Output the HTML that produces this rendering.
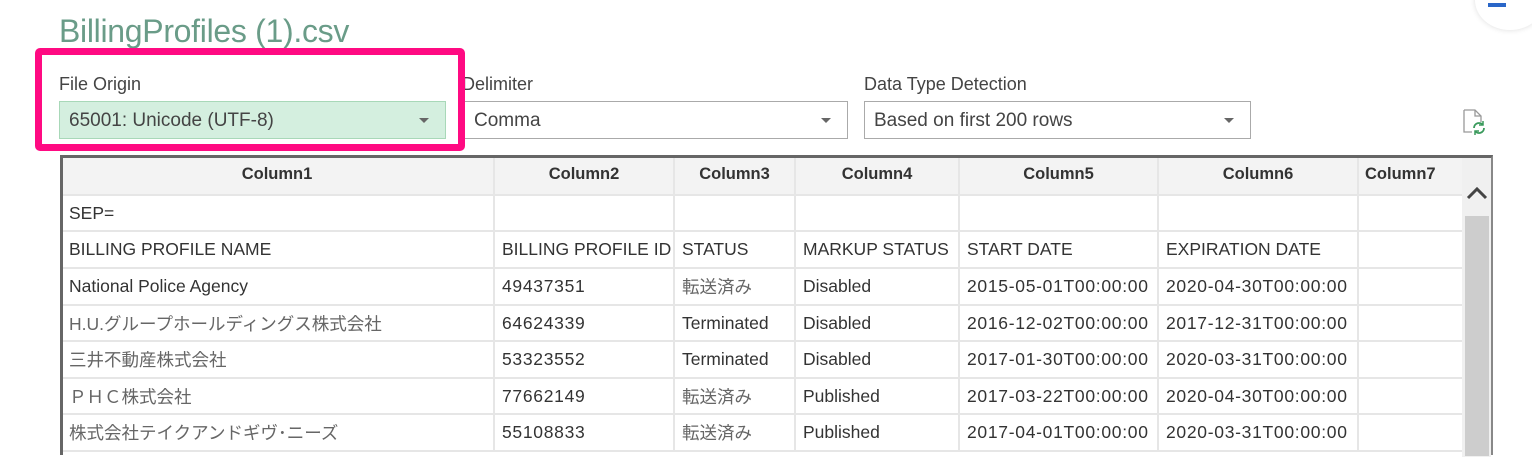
<!DOCTYPE html>
<html><head><meta charset="utf-8"><style>
body{margin:0;width:1532px;height:452px;background:#fff;position:relative;overflow:hidden;font-family:"Liberation Sans","Noto Sans CJK JP",sans-serif;color:#444}
.a{position:absolute}
.title{left:59px;top:13px;font-size:32px;color:#6a9c88;letter-spacing:-0.3px}
.lbl{font-size:18px;color:#444;top:74px}
.dd{top:101px;border:1px solid #aaa;background:#fff;font-size:19px;line-height:37px;padding-left:9px;box-sizing:border-box;height:38px;color:#444}
.dd:after{content:"";position:absolute;right:16px;top:16px;border-left:5px solid transparent;border-right:5px solid transparent;border-top:5px solid #666}
.pink{left:35px;top:48px;width:430px;height:103px;border:7px solid #ff0a82;border-radius:5px;box-sizing:border-box}
table{position:absolute;left:60px;top:155px;border-collapse:collapse;font-size:17.5px;color:#333;table-layout:fixed;width:1402px}
td{border:2px solid #e6e6e6;height:33px;padding:0 0 0 7px;white-space:nowrap;box-sizing:border-box;overflow:hidden}
th{background:#f3f3f3;font-weight:bold;height:37px;border-right:2px solid #e6e6e6;border-bottom:2px solid #e6e6e6;font-size:16.5px;color:#333;overflow:hidden;white-space:nowrap}
.tb{position:absolute;left:60px;top:155px;width:1433px;height:300px;border-left:3px solid #666;border-top:3px solid #666;border-right:2px solid #888;box-sizing:border-box;pointer-events:none}
.jp{color:#666}
.d{letter-spacing:0.7px}
</style></head><body>
<div class="a title">BillingProfiles (1).csv</div>
<div class="a" style="left:1475px;top:-30px;width:70px;height:60px;border-radius:50%;box-shadow:0 0 6px #ddd;background:#fff"></div>
<div class="a" style="left:1488px;top:3px;width:18px;height:4px;background:#2a66c8"></div>
<div class="a lbl" style="left:59px">File Origin</div>
<div class="a lbl" style="left:462px">Delimiter</div>
<div class="a lbl" style="left:864px">Data Type Detection</div>
<div class="a dd" style="left:59px;width:387px;background:#d4efdf;border-color:#a8d8b8">65001: Unicode (UTF-8)</div>
<div class="a dd" style="left:464px;width:384px">Comma</div>
<div class="a dd" style="left:864px;width:387px">Based on first 200 rows</div>
<div class="a pink"></div>
<svg class="a" style="left:1460px;top:108px" width="28" height="28" viewBox="0 0 28 28"><path d="M4 2h11l6 6v6M4 2v22h8" fill="none" stroke="#999" stroke-width="1.3"/><path d="M15 2v6h6" fill="none" stroke="#999" stroke-width="1.3"/><path d="M14 20a5 5 0 0 1 9-3M24 20a5 5 0 0 1-9 3" fill="none" stroke="#3a9a5c" stroke-width="1.8"/><path d="M23 13v4h-4M15 27v-4h4" fill="none" stroke="#3a9a5c" stroke-width="1.5"/></svg>
<table>
<colgroup><col style="width:433px"><col style="width:180px"><col style="width:121px"><col style="width:164px"><col style="width:199px"><col style="width:200px"><col style="width:105px"></colgroup>
<tr><th>Column1</th><th>Column2</th><th>Column3</th><th>Column4</th><th>Column5</th><th>Column6</th><th style="text-align:left;padding-left:6px">Column7</th></tr>
<tr><td style="height:36px">SEP=</td><td></td><td></td><td></td><td></td><td></td><td></td></tr>
<tr><td style="height:37px">BILLING PROFILE NAME</td><td>BILLING PROFILE ID</td><td>STATUS</td><td>MARKUP STATUS</td><td>START DATE</td><td>EXPIRATION DATE</td><td></td></tr>
<tr><td style="height:37px">National Police Agency</td><td class="d">49437351</td><td class="jp">転送済み</td><td>Disabled</td><td class="d">2015-05-01T00:00:00</td><td class="d">2020-04-30T00:00:00</td><td></td></tr>
<tr><td style="height:36px" class="jp">H.U.グループホールディングス株式会社</td><td class="d">64624339</td><td>Terminated</td><td>Disabled</td><td class="d">2016-12-02T00:00:00</td><td class="d">2017-12-31T00:00:00</td><td></td></tr>
<tr><td style="height:37px" class="jp">三井不動産株式会社</td><td class="d">53323552</td><td>Terminated</td><td>Disabled</td><td class="d">2017-01-30T00:00:00</td><td class="d">2020-03-31T00:00:00</td><td></td></tr>
<tr><td style="height:36px" class="jp">ＰＨＣ株式会社</td><td class="d">77662149</td><td class="jp">転送済み</td><td>Published</td><td class="d">2017-03-22T00:00:00</td><td class="d">2020-04-30T00:00:00</td><td></td></tr>
<tr><td style="height:37px" class="jp">株式会社テイクアンドギヴ･ニーズ</td><td class="d">55108833</td><td class="jp">転送済み</td><td>Published</td><td class="d">2017-04-01T00:00:00</td><td class="d">2020-03-31T00:00:00</td><td></td></tr>
</table>
<div class="a" style="left:1462px;top:157px;width:29px;height:300px;background:#f0f0f0"></div>
<div class="a" style="left:1465px;top:216px;width:24px;height:240px;background:#cdcdcd"></div>
<svg class="a" style="left:1466px;top:186px" width="22" height="14" viewBox="0 0 22 14"><path d="M2 12L11 3L20 12" fill="none" stroke="#444" stroke-width="3"/></svg>
<div class="tb"></div>
</body></html>
